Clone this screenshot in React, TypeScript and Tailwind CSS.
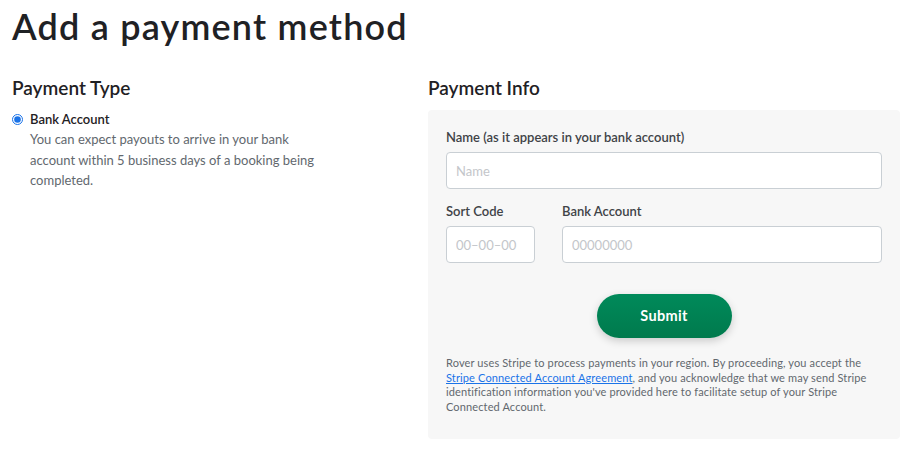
import { useState } from 'react';

function Field({ label, placeholder, className }: { label?: string; placeholder: string; className?: string }) {
  return (
    <label className={`flex flex-col ${className ?? ''}`}>
      {label && <span className="mb-[6px] text-[13px] font-semibold leading-[18px] text-[#404347]">{label}</span>}
      <input
        placeholder={placeholder}
        className="h-[37px] w-full rounded-[4px] border border-[#c9cfd4] bg-white px-[9px] text-[13px] text-[#1f2124] outline-none placeholder:text-[#c3c6ca]"
      />
    </label>
  );
}

export default function App() {
  const [type, setType] = useState('bank');

  return (
    <div className="min-h-[450px] bg-white px-[12px] pt-[4px] font-['Lato',sans-serif] text-[#1f2124]">
      <h1 className="text-[36px] font-semibold leading-[44px] tracking-[1.2px] text-[#1f2124]">Add a payment method</h1>

      <div className="mt-[28px] flex">
        <div className="w-[416px]">
          <h2 className="text-[19px] font-semibold leading-[24px] text-[#1f2124]">Payment Type</h2>
          <label className="mt-[11px] flex items-start gap-[7px]">
            <input
              type="radio"
              name="type"
              checked={type === 'bank'}
              onChange={() => setType('bank')}
              className="mt-[3px] h-[11px] w-[11px] accent-[#1a73e8]"
            />
            <span className="flex flex-col">
              <span className="text-[13px] font-semibold leading-[16px] text-[#1f2124]">Bank Account</span>
              <span className="mt-[2px] max-w-[300px] text-[13px] leading-[20.5px] text-[#62686e]">
                You can expect payouts to arrive in your bank account within 5 business days of a booking being completed.
              </span>
            </span>
          </label>
        </div>

        <div className="w-[472px]">
          <h2 className="text-[19px] font-semibold leading-[24px] text-[#1f2124]">Payment Info</h2>
          <div className="mt-[10px] rounded-[4px] bg-[#f7f7f7] px-[18px] pb-[25px] pt-[18px]">
            <Field label="Name (as it appears in your bank account)" placeholder="Name" />
            <div className="mt-[13px] flex gap-[27px]">
              <Field label="Sort Code" placeholder="00–00–00" className="w-[89px]" />
              <Field label="Bank Account" placeholder="00000000" className="flex-1" />
            </div>
            <div className="mt-[31px] flex justify-center">
              <button className="h-[44px] w-[135px] rounded-full bg-gradient-to-b from-[#008a5a] to-[#007a4d] text-[14.5px] font-bold tracking-[0.3px] text-white shadow-[0_3px_8px_rgba(0,0,0,0.18)]">
                Submit
              </button>
            </div>
            <p className="mt-[18px] text-[11px] leading-[14.5px] tracking-[0.13px] text-[#62686e]">
              Rover uses Stripe to process payments in your region. By proceeding, you accept the{' '}
              <a href="#" className="text-[#1a73e8] underline">
                Stripe Connected Account Agreement
              </a>
              , and you acknowledge that we may send Stripe identification information you've provided here to facilitate setup of your Stripe Connected Account.
            </p>
          </div>
        </div>
      </div>
    </div>
  );
}
